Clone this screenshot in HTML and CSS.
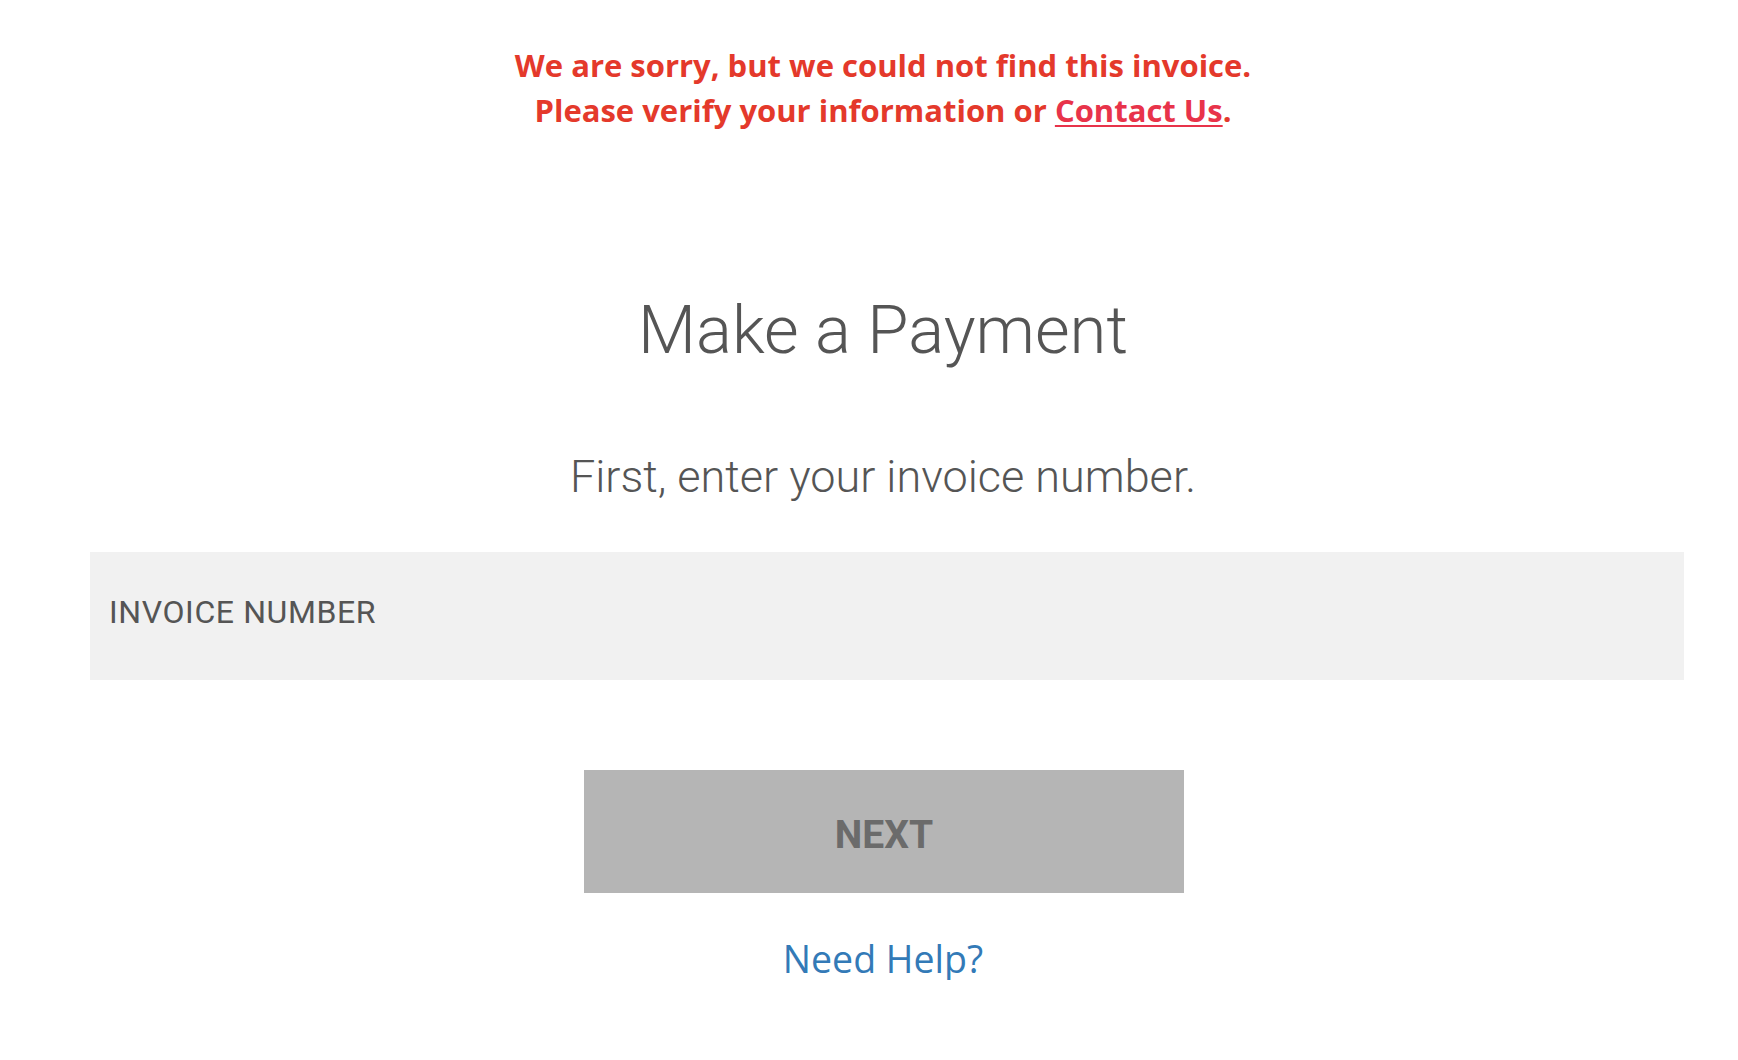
FILE: index.html
```html
<!DOCTYPE html>
<html lang="en">
<head>
<meta charset="utf-8">
<title>Make a Payment</title>
<link rel="stylesheet" href="styles.css">
</head>
<body>
<main class="page">
  <div class="error">
    <p class="error-line">We are sorry, but we could not find this invoice.</p>
    <p class="error-line">Please verify your information or <a class="error-link" href="#">Contact Us</a>.</p>
  </div>
  <h1 class="title">Make a Payment</h1>
  <p class="subtitle">First, enter your invoice number.</p>
  <div class="field">
    <input class="field-input" type="text" placeholder="INVOICE NUMBER">
  </div>
  <div class="actions">
    <button class="next-btn" type="button">NEXT</button>
  </div>
  <div class="help">
    <a class="help-link" href="#">Need Help?</a>
  </div>
</main>
</body>
</html>
```

FILE: styles.css
```css
html, body {
  margin: 0;
  padding: 0;
  background: #ffffff;
}

body {
  font-family: "Roboto", "Liberation Sans", sans-serif;
}

.page {
  padding: 43px 54px 0 90px;
  text-align: center;
}

.error,
.title,
.subtitle,
.help {
  padding-right: 8px;
}

.error {
  font-family: "Open Sans", "Lato", sans-serif;
  font-weight: 700;
  font-size: 31px;
  line-height: 45px;
  color: #e4392b;
}

.error-line {
  margin: 0;
}

.error-link {
  color: #e8334a;
  text-decoration: underline;
  text-decoration-thickness: 2px;
  text-underline-offset: 3px;
}

.title {
  margin: 155px 0 0;
  font-family: "Roboto", sans-serif;
  font-weight: 300;
  font-size: 67px;
  line-height: 84px;
  color: #555555;
}

.subtitle {
  margin: 78px 0 0;
  font-family: "Roboto", sans-serif;
  font-weight: 300;
  font-size: 45px;
  line-height: 53px;
  color: #555555;
}

.field {
  margin-top: 49px;
}

.field-input {
  display: block;
  box-sizing: border-box;
  width: 100%;
  height: 128px;
  margin: 0;
  border: 0;
  padding: 0 19px 8px;
  background: #f1f1f1;
  font-family: "Roboto", sans-serif;
  font-weight: 400;
  font-size: 32px;
  letter-spacing: 0.6px;
  color: #555555;
  outline: none;
}

.field-input::placeholder {
  color: #555555;
  opacity: 1;
}

.actions {
  display: flex;
  justify-content: center;
  margin-top: 90px;
  padding-right: 6px;
}

.next-btn {
  width: 600px;
  height: 123px;
  margin: 0;
  border: 0;
  padding: 7px 0 0;
  background: #b5b5b5;
  font-family: "Roboto", sans-serif;
  font-weight: 700;
  font-size: 39px;
  color: #6b6b6b;
  cursor: default;
}

.help {
  margin-top: 44px;
}

.help-link {
  font-family: "Open Sans", "Lato", sans-serif;
  font-weight: 400;
  font-size: 37.5px;
  line-height: 43px;
  color: #337ab7;
  text-decoration: none;
}
```
